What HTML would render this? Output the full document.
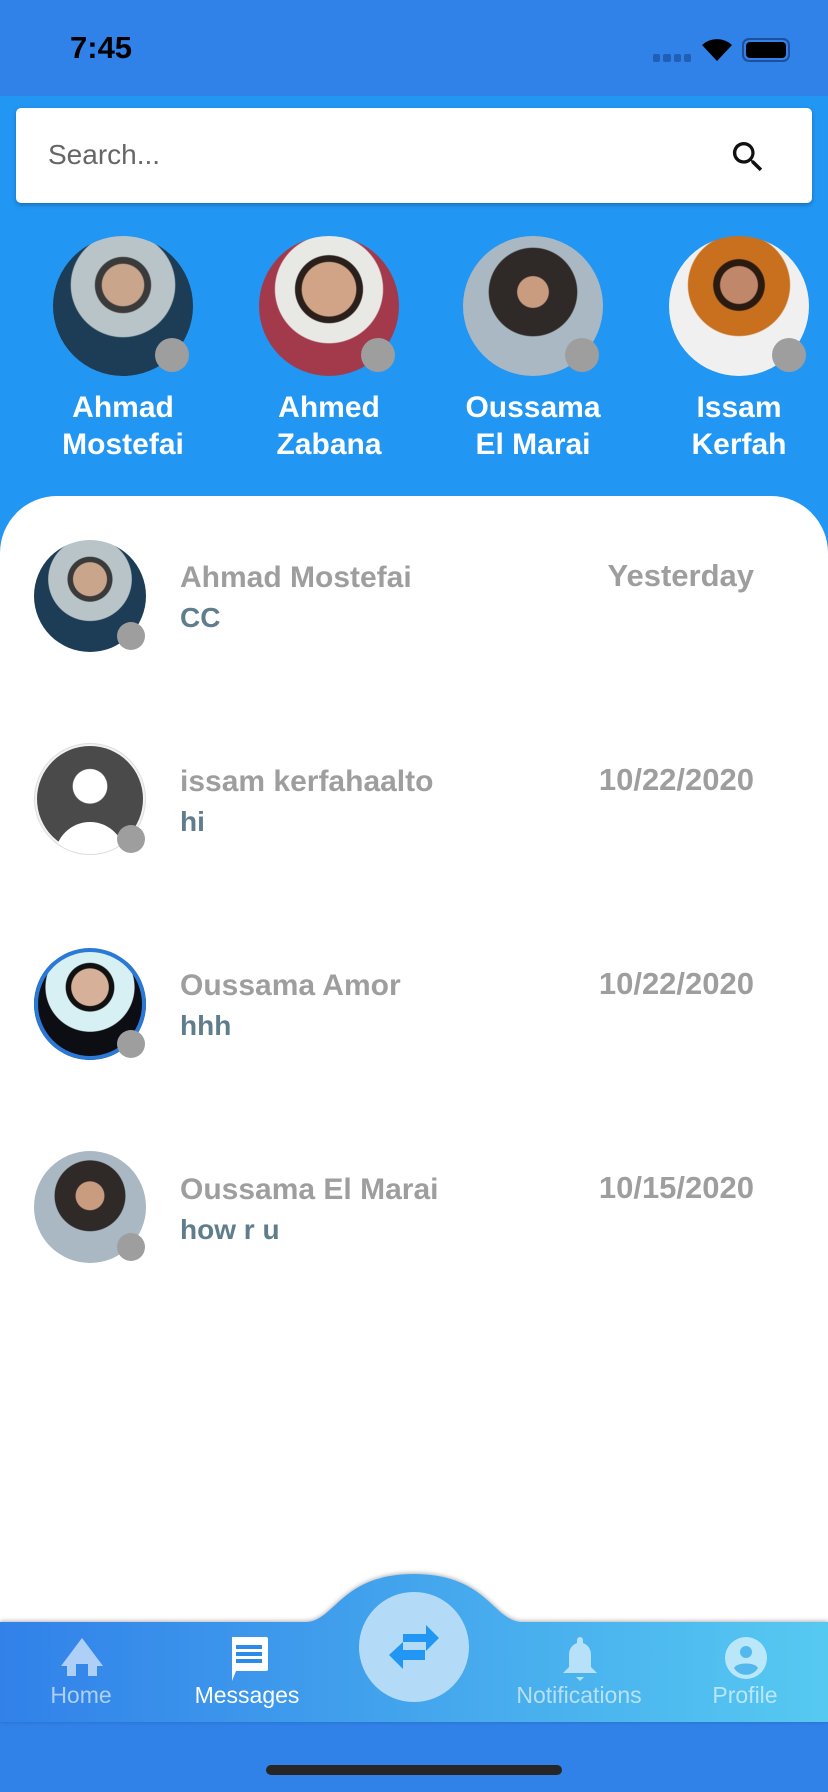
<!DOCTYPE html>
<html><head><meta charset="utf-8"><style>
*{margin:0;padding:0;box-sizing:border-box}
body{width:828px;height:1792px;overflow:hidden;background:#2196F3;font-family:"Liberation Sans",sans-serif;position:relative}
.abs{position:absolute}
.status{left:0;top:0;width:828px;height:96px;background:#3081E8}
.search{left:16px;top:108px;width:796px;height:95px;background:#fff;border-radius:5px;box-shadow:0 2px 4px rgba(0,0,0,.25)}
.av{border-radius:50%;overflow:hidden}
.dot{border-radius:50%;background:#9E9E9E}
.nm{color:#fff;font-weight:bold;font-size:30px;text-align:center;width:190px;line-height:37px}
.panel{left:0;top:496px;width:828px;height:1200px;background:#fff;border-radius:57px 57px 0 0}
.rn{left:180px;font-weight:bold;font-size:30px;color:#9E9E9E}
.rm{left:180px;font-weight:bold;font-size:28px;color:#607D8B}
.rd{right:74px;font-weight:bold;font-size:31px;color:#9E9E9E}
.lbl{font-size:23px;text-align:center;width:160px;color:rgba(255,255,255,.6)}
</style></head><body>
<div class="abs status"></div>
<div class="abs" style="left:70px;top:30px;font-size:31px;font-weight:bold;color:#000">7:45</div>
<div class="abs" style="left:653px;top:54px;width:38px;height:8px;display:flex;gap:3px"><i style="flex:1;background:#1f5fb5;border-radius:2px"></i><i style="flex:1;background:#1f5fb5;border-radius:2px"></i><i style="flex:1;background:#1f5fb5;border-radius:2px"></i><i style="flex:1;background:#1f5fb5;border-radius:2px"></i></div>
<svg class="abs" style="left:700px;top:36px" width="34" height="26" viewBox="0 0 34 26"><path d="M17 25L2 9a22 22 0 0 1 30 0z" fill="#000"/></svg>
<div class="abs" style="left:742px;top:38px;width:48px;height:24px;border:2px solid #1f4f9a;border-radius:7px;padding:2px"><div style="width:100%;height:100%;background:#000;border-radius:4px"></div></div>
<div class="abs search"></div>
<div class="abs" style="left:48px;top:139px;font-size:28px;color:#666">Search...</div>
<svg class="abs" style="left:728px;top:137px" width="40" height="40" viewBox="0 0 24 24"><path d="M15.5 14h-.8l-.3-.3A6.5 6.5 0 1 0 9.5 16a6.5 6.5 0 0 0 4.2-1.6l.3.3v.8l5 5 1.5-1.5-5-5zm-6 0A4.5 4.5 0 1 1 14 9.5 4.5 4.5 0 0 1 9.5 14z" fill="#111"/></svg>

<div class="abs av" style="left:53px;top:236px;width:140px;height:140px;background:radial-gradient(circle at 50% 35%,#c9a58c 0 18%,#3a3a3a 19% 24%,#b9c4c8 25% 45%,#1d3c55 46%)"></div>
<div class="abs av" style="left:259px;top:236px;width:140px;height:140px;background:radial-gradient(circle at 50% 38%,#d2a487 0 24%,#2a1f1a 25% 30%,#e8e8e4 31% 48%,#a33a4c 49%)"></div>
<div class="abs av" style="left:463px;top:236px;width:140px;height:140px;background:radial-gradient(circle at 50% 40%,#c99c80 0 14%,#2f2a28 15% 40%,#a9b8c3 41%)"></div>
<div class="abs av" style="left:669px;top:236px;width:140px;height:140px;background:radial-gradient(circle at 50% 35%,#c0876a 0 16%,#2a1a10 17% 22%,#c8701e 23% 44%,#f0f0f0 45%)"></div>
<div class="abs dot" style="left:155px;top:338px;width:34px;height:34px"></div>
<div class="abs dot" style="left:361px;top:338px;width:34px;height:34px"></div>
<div class="abs dot" style="left:565px;top:338px;width:34px;height:34px"></div>
<div class="abs dot" style="left:772px;top:338px;width:34px;height:34px"></div>
<div class="abs nm" style="left:28px;top:389px">Ahmad<br>Mostefai</div>
<div class="abs nm" style="left:234px;top:389px">Ahmed<br>Zabana</div>
<div class="abs nm" style="left:438px;top:389px">Oussama<br>El Marai</div>
<div class="abs nm" style="left:644px;top:389px">Issam<br>Kerfah</div>

<div class="abs panel"></div>
<div class="abs av" style="left:34px;top:540px;width:112px;height:112px;background:radial-gradient(circle at 50% 35%,#c9a58c 0 18%,#3a3a3a 19% 24%,#b9c4c8 25% 45%,#1d3c55 46%)"></div>
<div class="abs dot" style="left:117px;top:622px;width:28px;height:28px"></div>
<div class="abs rn" style="top:561px">Ahmad Mostefai</div>
<div class="abs rm" style="top:602px">CC</div>
<div class="abs rd" style="top:558px">Yesterday</div>

<div class="abs av" style="left:34px;top:743px;width:112px;height:112px;background:#f2f2f2;border:1px solid #ddd"><div style="position:absolute;left:2px;top:2px;width:106px;height:106px;border-radius:50%;background:radial-gradient(circle at 50% 38%,#fff 0 20%,#4a4a4a 21%);"></div><div style="position:absolute;left:20px;top:78px;width:70px;height:40px;border-radius:35px 35px 0 0;background:#fff"></div></div>
<div class="abs dot" style="left:117px;top:825px;width:28px;height:28px"></div>
<div class="abs rn" style="top:765px">issam kerfahaalto</div>
<div class="abs rm" style="top:806px">hi</div>
<div class="abs rd" style="top:762px">10/22/2020</div>

<div class="abs av" style="left:34px;top:948px;width:112px;height:112px;background:radial-gradient(circle at 50% 35%,#d7b09a 0 20%,#111 21% 26%,#d6f0f4 27% 48%,#0d0d14 49%);box-shadow:inset 0 0 0 4px #2a79d6"></div>
<div class="abs dot" style="left:117px;top:1030px;width:28px;height:28px"></div>
<div class="abs rn" style="top:969px">Oussama Amor</div>
<div class="abs rm" style="top:1010px">hhh</div>
<div class="abs rd" style="top:966px">10/22/2020</div>

<div class="abs av" style="left:34px;top:1151px;width:112px;height:112px;background:radial-gradient(circle at 50% 40%,#c99c80 0 16%,#2f2a28 17% 40%,#a9b8c3 41%)"></div>
<div class="abs dot" style="left:117px;top:1233px;width:28px;height:28px"></div>
<div class="abs rn" style="top:1173px">Oussama El Marai</div>
<div class="abs rm" style="top:1214px">how r u</div>
<div class="abs rd" style="top:1170px">10/15/2020</div>

<div class="abs" style="left:0;top:1722px;width:828px;height:70px;background:#3081E8"></div>
<svg class="abs" style="left:0;top:1560px" width="828" height="170" viewBox="0 0 828 170">
<defs><linearGradient id="g" x1="0" x2="1"><stop offset="0" stop-color="#3181E9"/><stop offset="1" stop-color="#56C9F1"/></linearGradient>
<filter id="s"><feDropShadow dx="0" dy="-1" stdDeviation="2" flood-opacity=".3"/></filter></defs>
<path d="M0 62H305C335 62 340 14 414 14S493 62 523 62H828V162H0Z" fill="url(#g)" filter="url(#s)"/>
</svg>
<div class="abs" style="left:359px;top:1592px;width:110px;height:110px;border-radius:50%;background:#B3DBF8"></div>
<svg class="abs" style="left:383px;top:1622px" width="62" height="52" viewBox="0 0 62 52"><path d="M20 12h23V3l13 13-13 13v-9H20z M42 28H20v-8L6 33l14 14v-9h22z" fill="#2196F3"/></svg>
<svg class="abs" style="left:61px;top:1638px" width="42" height="38" viewBox="0 0 42 38"><path d="M21 0L0 28h6v10h9V26h12v12h9V28h6z" fill="rgba(255,255,255,.6)"/></svg>
<svg class="abs" style="left:228px;top:1637px" width="42" height="44" viewBox="0 0 42 44"><path d="M4 0h34a2 2 0 0 1 2 2v30a2 2 0 0 1-2 2H8l-4 10z" fill="#fff"/><path d="M8 8h26v4H8zM8 15h26v4H8zM8 22h26v4H8z" fill="#2b8be8"/></svg>
<svg class="abs" style="left:563px;top:1637px" width="34" height="44" viewBox="0 0 34 44"><path d="M17 0c2 0 3 2 3 3v3c5 2 8 6 8 12v12l6 6H0l6-6V18c0-6 3-10 8-12V3c0-1 1-3 3-3zM13 40h8l-4 4z" fill="rgba(255,255,255,.6)"/></svg>
<svg class="abs" style="left:725px;top:1637px" width="42" height="42" viewBox="0 0 42 42"><circle cx="21" cy="21" r="21" fill="rgba(255,255,255,.6)"/><circle cx="21" cy="15" r="6" fill="#52b8ee"/><path d="M9 31c3-6 21-6 24 0a14 14 0 0 1-24 0z" fill="#52b8ee"/></svg>
<div class="abs lbl" style="left:1px;top:1682px">Home</div>
<div class="abs lbl" style="left:167px;top:1682px;color:#fff">Messages</div>
<div class="abs lbl" style="left:499px;top:1682px">Notifications</div>
<div class="abs lbl" style="left:665px;top:1682px">Profile</div>
<div class="abs" style="left:266px;top:1765px;width:296px;height:10px;border-radius:5px;background:#262626"></div>
</body></html>
